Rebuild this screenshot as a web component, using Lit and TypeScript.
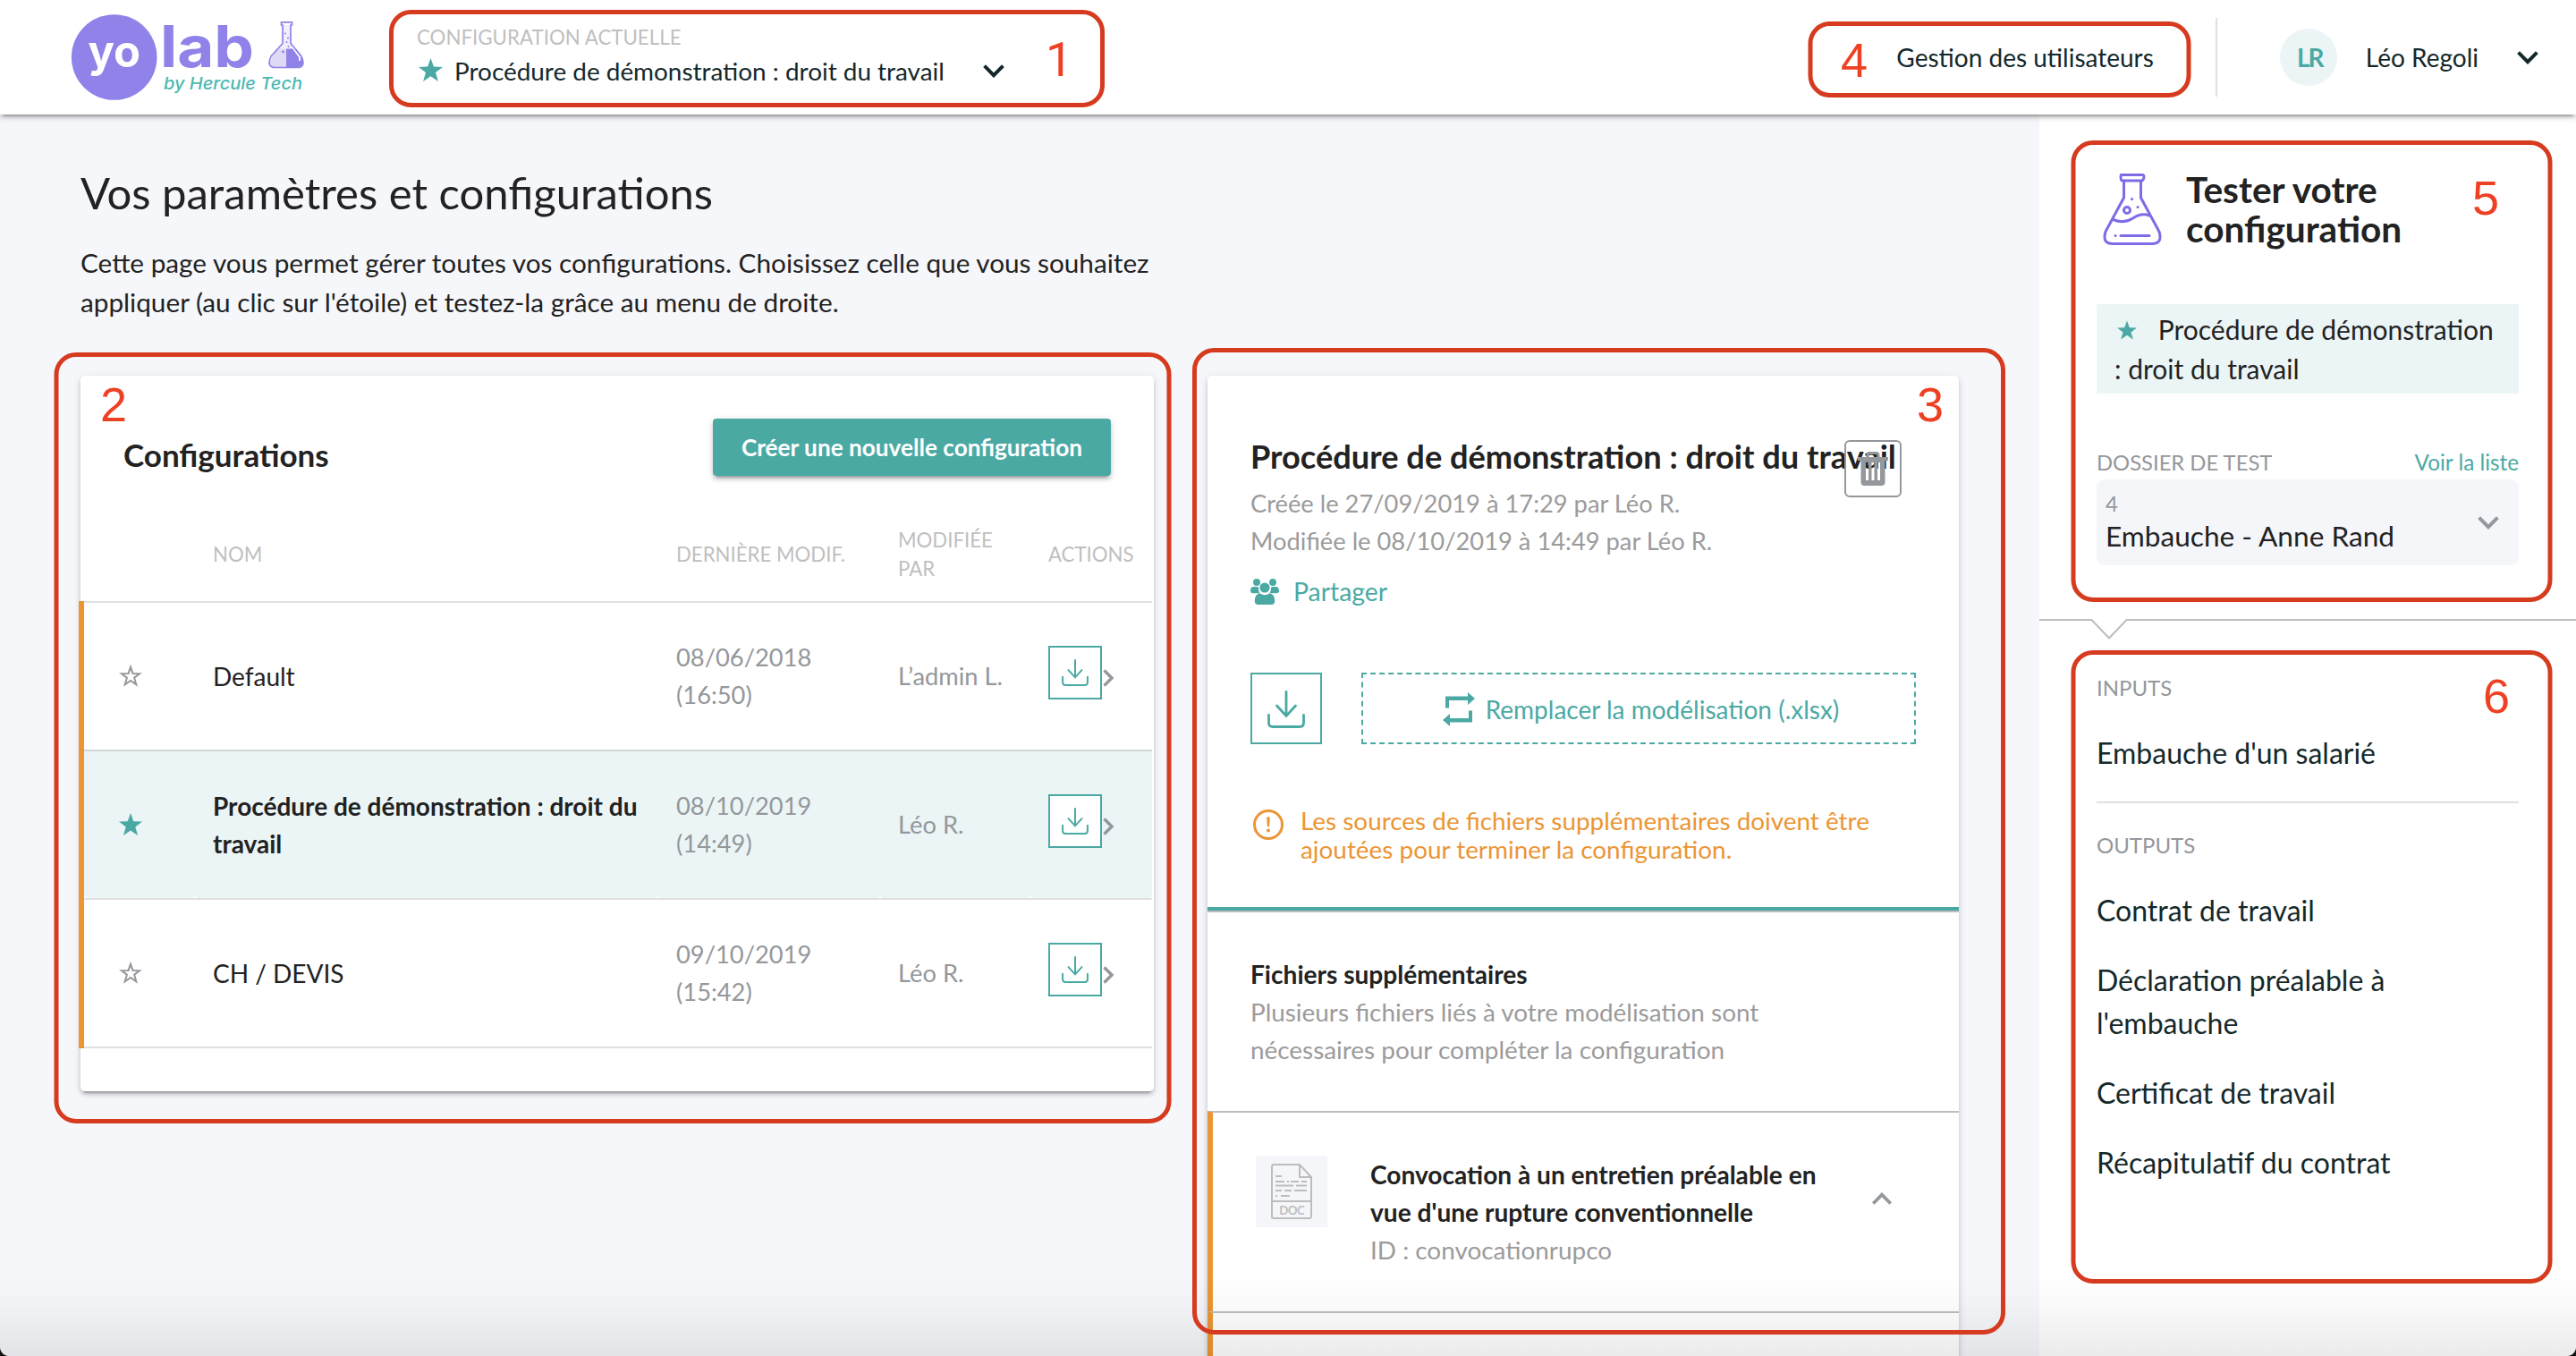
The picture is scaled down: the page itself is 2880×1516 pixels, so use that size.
import { LitElement, css, html, svg } from 'lit';
import { customElement, property } from 'lit/decorators.js';
import { classMap } from 'lit/directives/class-map.js';

interface Configuration {
  name: string;
  date: string;
  time: string;
  author: string;
  active?: boolean;
}

const CONFIGURATIONS: Configuration[] = [
  { name: 'Default', date: '08/06/2018', time: '16:50', author: 'L’admin L.' },
  {
    name: 'Procédure de démonstration : droit du travail',
    date: '08/10/2019',
    time: '14:49',
    author: 'Léo R.',
    active: true,
  },
  { name: 'CH / DEVIS', date: '09/10/2019', time: '15:42', author: 'Léo R.' },
];

const OUTPUTS = [
  'Contrat de travail',
  "Déclaration préalable à l'embauche",
  'Certificat de travail',
  'Récapitulatif du contrat',
];

// frame: x, y, width, height - label: x, baseline
const CALLOUTS = [
  { n: 1, frame: [437.5, 13.5, 795, 104], label: [1169, 85] },
  { n: 2, frame: [63, 396.5, 1244, 857], label: [112, 471] },
  { n: 3, frame: [1335.5, 391.5, 904, 1098], label: [2143, 471] },
  { n: 4, frame: [2024, 26.5, 423, 80], label: [2058, 86] },
  { n: 5, frame: [2318, 159.5, 533, 511], label: [2764, 240] },
  { n: 6, frame: [2318, 729.5, 533, 703], label: [2776, 797] },
];

const star = (filled: boolean) => svg`
  <svg class="star" viewBox="0 0 26 25">
    ${
      filled
        ? svg`<path fill="currentColor" d="M13 0l3.3 9.2 9.7.3-7.7 5.9 2.8 9.6-8.1-5.6L4.9 25l2.8-9.6L0 9.5l9.7-.3z"/>`
        : svg`<path fill="none" stroke="currentColor" stroke-width="2" d="M13 2.8l2.5 7.1 7.6.2-6 4.6 2.2 7.6-6.3-4.4-6.3 4.4 2.2-7.6-6-4.6 7.6-.2z"/>`
    }
  </svg>
`;

const chevron = () => svg`
  <svg class="chevron" viewBox="0 0 24 15">
    <path fill="none" stroke="currentColor" stroke-width="4" d="M1.6 1.6L12 12.2 22.4 1.6"/>
  </svg>
`;

const download = () => svg`
  <svg class="download" viewBox="0 0 42 42">
    <g fill="none" stroke="currentColor" stroke-width="2.8" stroke-linecap="round">
      <path d="M21 1.5V28M10.5 17L21 28.5 31.5 17"/>
      <path d="M1.5 27.5V36q0 4.5 4.5 4.5H36q4.5 0 4.5-4.5V27.5"/>
    </g>
  </svg>
`;

@customElement('yolab-logo')
export class YolabLogo extends LitElement {
  static styles = css`
    :host {
      display: block;
      width: 264px;
      height: 96px;
    }
    svg {
      display: block;
      overflow: visible;
    }
    text {
      font-family: Inter, sans-serif;
      font-weight: 700;
    }
    .yo {
      fill: #fff;
      font-size: 49px;
    }
    .lab {
      fill: #8f82e8;
      font-size: 64px;
    }
    .by {
      fill: #4cb8b1;
      font-size: 19px;
      font-style: italic;
      font-weight: 500;
    }
  `;

  render() {
    return html`
      <svg width="264" height="96" viewBox="0 0 264 96">
        <circle cx="47.7" cy="48" r="47.8" fill="#8f82e8" />
        <text class="yo" x="18.5" y="59">yo</text>
        <text class="lab" x="99" y="59" textLength="105" lengthAdjust="spacingAndGlyphs">lab</text>
        <text class="by" x="103" y="84" textLength="155" lengthAdjust="spacingAndGlyphs">by Hercule Tech</text>
        <path d="M236 12h9v21l9 9H227l9-9z" fill="#f1effc" />
        <path d="M229 38.5h11V59h-12q-9-1-5-8z" fill="#dedaf6" />
        <path d="M240 38.5h11l7 12.5q2 7-5 8h-13z" fill="#8f82e8" />
        <path d="M246.5 36l8.5 12v4" stroke="#fff" stroke-width="1.8" fill="none" />
        <path
          d="M234.5 8.8h12V12H245v20.5L257 47q5.5 12.5-5 12.5h-24q-10.5 0-5-12.5l13-14.5V12h-1.5z"
          fill="none"
          stroke="#8f82e8"
          stroke-width="1.7"
        />
        <g fill="#8f82e8">
          <circle cx="239" cy="21.5" r="1" />
          <circle cx="242" cy="26.5" r="1" />
          <circle cx="240.5" cy="31" r="1" />
          <circle cx="242.5" cy="36" r="1" />
          <circle cx="236.5" cy="42" r="1.4" />
        </g>
      </svg>
    `;
  }
}

@customElement('yolab-header')
export class YolabHeader extends LitElement {
  static styles = css`
    :host {
      position: relative;
      z-index: 1;
      display: flex;
      align-items: center;
      box-sizing: border-box;
      height: 128px;
      padding: 0 42px 0 80px;
      background: #fff;
      color: #14282b;
      font-size: 28px;
      line-height: 40px;
      box-shadow:
        0 4px 4px rgba(0, 0, 0, 0.14),
        0 6px 2px -4px rgba(0, 0, 0, 0.2),
        0 2px 10px rgba(0, 0, 0, 0.12);
    }
    .current {
      flex: 1;
      padding: 0 0 2px 122px;
    }
    .label {
      color: #bfbfbf;
      font-size: 22.3px;
      line-height: 29px;
    }
    .name {
      display: flex;
      align-items: center;
      margin-top: 3px;
      font-size: 27.9px;
    }
    .star {
      width: 27px;
      height: 26px;
      margin: 0 13px 3px 2px;
      color: #4ba9a3;
    }
    .chevron {
      width: 24px;
      height: 15px;
    }
    .name .chevron {
      margin-left: 43px;
    }
    .user {
      display: flex;
      align-items: center;
      height: 88px;
      margin-left: 69px;
      padding-left: 70px;
      border-left: 2px solid #e0e0e0;
    }
    .avatar {
      width: 64px;
      height: 64px;
      margin-right: 32px;
      border-radius: 50%;
      background: #ebf5f6;
      color: #4ba9a3;
      font-weight: 700;
      line-height: 64px;
      text-align: center;
      text-indent: 3px;
      letter-spacing: -2px;
    }
    .user .chevron {
      margin-left: 43px;
    }
  `;

  render() {
    return html`
      <yolab-logo></yolab-logo>
      <div class="current">
        <div class="label">CONFIGURATION ACTUELLE</div>
        <div class="name">
          ${star(true)} Procédure de démonstration : droit du travail ${chevron()}
        </div>
      </div>
      <div class="users">Gestion des utilisateurs</div>
      <div class="user">
        <div class="avatar">LR</div>
        <div>Léo Regoli</div>
        ${chevron()}
      </div>
    `;
  }
}

@customElement('yolab-configurations')
export class YolabConfigurations extends LitElement {
  static styles = css`
    :host {
      display: block;
      height: 800px;
      border-radius: 5px;
      background: #fff;
      box-shadow:
        0 4px 4px rgba(0, 0, 0, 0.14),
        0 6px 2px -4px rgba(0, 0, 0, 0.2),
        0 2px 10px rgba(0, 0, 0, 0.12);
    }
    header {
      display: flex;
      justify-content: space-between;
      align-items: center;
      padding: 48px 48px 0;
    }
    h2 {
      margin: 16px 0 0;
      font-size: 35px;
      line-height: 44px;
    }
    button {
      height: 64px;
      padding: 0 32px;
      border: none;
      border-radius: 4px;
      background: #4ba9a3;
      color: #fff;
      font: 700 26.2px/64px Lato, sans-serif;
      box-shadow:
        0 4px 4px rgba(0, 0, 0, 0.14),
        0 6px 2px -4px rgba(0, 0, 0, 0.2),
        0 2px 10px rgba(0, 0, 0, 0.12);
    }
    .row {
      display: grid;
      grid-template-columns: 6px 124px 518px 248px 168px 136px;
      width: 1200px;
      height: 166px;
      margin-left: -2px;
      color: #94979b;
      font-size: 27.3px;
      line-height: 42px;
    }
    .row:last-child {
      height: 168px;
    }
    .row > div {
      display: flex;
      align-items: center;
      padding: 0 20px;
      border-top: 2px solid #e0e0e0;
    }
    .row > .bar {
      padding: 0;
      border: none;
      background: #eb9534;
    }
    .row > .fav {
      padding: 0 0 1px 39px;
    }
    .row > .actions {
      padding-right: 0;
    }
    .row:last-child > div:not(.bar) {
      border-bottom: 2px solid #e0e0e0;
    }
    .row.active > div:not(.bar) {
      border-top-color: #d0d7d8;
      border-radius: 0 0 4px 4px;
      background: #ebf5f6;
    }
    .row.active > .name {
      font-weight: 700;
    }
    .row.active > .fav {
      color: #4ba9a3;
    }
    .row > .name {
      padding-bottom: 1px;
      color: #222;
      font-size: 28px;
    }
    .row.head {
      height: 107px;
      margin-top: 34px;
      margin-bottom: -1px;
      color: #bfbfbf;
      font-size: 22.2px;
      line-height: 32px;
    }
    .row.head > div {
      padding-bottom: 0;
      border: none;
    }
    .star {
      width: 26px;
      height: 25px;
    }
    .dl {
      box-sizing: border-box;
      width: 60px;
      height: 60px;
      margin-bottom: 8px;
      padding: 13px;
      border: 2px solid #4ba9a3;
      background: #fff;
      color: #4ba9a3;
    }
    .download {
      display: block;
      width: 30px;
      height: 30px;
    }
    .go {
      width: 12px;
      height: 20px;
      margin: 4px 0 0 1px;
    }
  `;

  render() {
    return html`
      <header>
        <h2>Configurations</h2>
        <button>Créer une nouvelle configuration</button>
      </header>
      <div class="row head">
        <div></div>
        <div></div>
        <div>NOM</div>
        <div>DERNIÈRE MODIF.</div>
        <div>MODIFIÉE<br />PAR</div>
        <div class="actions">ACTIONS</div>
      </div>
      ${CONFIGURATIONS.map(
        (c) => html`
          <div class=${classMap({ row: true, active: !!c.active })}>
            <div class="bar"></div>
            <div class="fav">${star(!!c.active)}</div>
            <div class="name">${c.name}</div>
            <div>${c.date}<br />(${c.time})</div>
            <div>${c.author}</div>
            <div class="actions">
              <span class="dl">${download()}</span>
              <svg class="go" viewBox="0 0 12 20">
                <path d="M1.5 1.5L10 10 1.5 18.5" fill="none" stroke="currentColor" stroke-width="3.4" />
              </svg>
            </div>
          </div>
        `,
      )}
    `;
  }
}

@customElement('yolab-detail')
export class YolabDetail extends LitElement {
  static styles = css`
    :host {
      position: relative;
      display: block;
      border-radius: 5px;
      background: #fff;
      color: #9b9b9b;
      font-size: 27.9px;
      line-height: 42px;
      box-shadow:
        0 4px 4px rgba(0, 0, 0, 0.14),
        0 6px 2px -4px rgba(0, 0, 0, 0.2),
        0 2px 10px rgba(0, 0, 0, 0.12);
    }
    h2 {
      margin: 0 0 10px;
      color: #222;
      font-size: 36.2px;
      line-height: 44px;
      white-space: nowrap;
    }
    h3 {
      margin: 0;
      color: #222;
      font-size: 28.1px;
      line-height: 42px;
    }
    .summary {
      padding: 68px 48px 49px;
      border-bottom: 4px solid #4ba9a3;
    }
    .meta {
      font-size: 27.3px;
    }
    .trash {
      position: absolute;
      top: 72px;
      left: 712px;
      box-sizing: border-box;
      width: 64px;
      height: 64px;
      border: 2px solid #94979b;
      border-radius: 6px;
      color: #94979b;
    }
    .trash svg {
      display: block;
      width: 34px;
      height: 38px;
      margin: 11px auto 0;
    }
    .share {
      display: flex;
      align-items: center;
      gap: 16px;
      margin-top: 14px;
      color: #4ba9a3;
      font-size: 28.4px;
    }
    .share svg {
      width: 32px;
      height: 29px;
    }
    .tools {
      display: flex;
      gap: 44px;
      margin-top: 70px;
      color: #4ba9a3;
    }
    .dl {
      box-sizing: border-box;
      width: 80px;
      height: 80px;
      padding: 18px 17px;
      border: 2px solid #4ba9a3;
    }
    .download {
      display: block;
      width: 42px;
      height: 42px;
    }
    .replace {
      flex: 1;
      display: flex;
      justify-content: center;
      align-items: center;
      gap: 12px;
      box-sizing: border-box;
      height: 80px;
      padding: 2px 0 0 5px;
      border: 2px dashed #4ba9a3;
      font-size: 28px;
    }
    .replace svg {
      width: 36px;
      height: 38px;
    }
    .warning {
      display: flex;
      align-items: flex-start;
      gap: 19px;
      margin-top: 69px;
      color: #eb9534;
      line-height: 32px;
    }
    .warning svg {
      flex: none;
      width: 34px;
      height: 34px;
      margin: 4px 0 0 3px;
    }
    .files {
      padding: 48px;
      border-top: 2px solid #bdbdbd;
    }
    .files p {
      max-width: 660px;
      margin: 0;
    }
    .file {
      display: flex;
      align-items: flex-start;
      min-height: 126px;
      padding: 48px;
      border-top: 2px solid #bdbdbd;
      border-left: 6px solid #eb9534;
    }
    .doc {
      display: grid;
      place-items: center;
      width: 80px;
      height: 80px;
      margin-right: 48px;
      background: #f5f6fa;
    }
    .doc svg {
      width: 46px;
      height: 62px;
    }
    .doc text {
      fill: #bdbdbd;
      font-family: 'Open Sans', sans-serif;
      font-size: 14.5px;
      font-weight: 600;
    }
    .about {
      width: 520px;
    }
    .file .chevron {
      width: 24px;
      height: 14px;
      margin: 41px 0 0 40px;
      color: #94979b;
      transform: rotate(180deg);
    }
  `;

  render() {
    return html`
      <section class="summary">
        <h2>Procédure de démonstration : droit du travail</h2>
        <div class="meta">Créée le 27/09/2019 à 17:29 par Léo R.</div>
        <div class="meta">Modifiée le 08/10/2019 à 14:49 par Léo R.</div>
        <div class="share">
          <svg viewBox="0 0 32 29" fill="currentColor">
            <circle cx="7" cy="4" r="4" />
            <circle cx="25" cy="4" r="4" />
            <path d="M3.5 9h4q.8.5 1.500.6-.4 4.200 1.500 6.700H3q-3 0-3-3Q.2 9 3.500 9z" />
            <path d="M28.500 9h-4q-.8.5-1.500.6.4 4.200-1.500 6.700H29q3 0 3-3-.2-4.300-3.500-4.300z" />
            <circle cx="16" cy="10" r="5.6" />
            <path d="M10.500 16.200q5.500 4 11 0 5.700 1.200 5.700 8.800 0 4-4 4H8.800q-4 0-4-4 0-7.600 5.700-8.800z" />
          </svg>
          Partager
        </div>
        <div class="tools">
          <span class="dl">${download()}</span>
          <div class="replace">
            <svg viewBox="0 0 36 38" fill="currentColor">
              <path d="M3 17.5V4.500h25V0l8 7-8 7V9H7v8.500z" />
              <path d="M33 20.500v13H8V38l-8-7 8-7v5h21v-8.500z" />
            </svg>
            Remplacer la modélisation (.xlsx)
          </div>
        </div>
        <div class="warning">
          <svg viewBox="0 0 34 34">
            <circle cx="17" cy="17" r="15.5" fill="none" stroke="currentColor" stroke-width="3" />
            <path d="M15.200 8.500h3.600l-.6 10.500h-2.400z" fill="currentColor" />
            <circle cx="17" cy="23.5" r="2" fill="currentColor" />
          </svg>
          <span>
            Les sources de fichiers supplémentaires doivent être ajoutées pour terminer la configuration.
          </span>
        </div>
      </section>
      <section class="files">
        <h3>Fichiers supplémentaires</h3>
        <p>Plusieurs fichiers liés à votre modélisation sont nécessaires pour compléter la configuration</p>
      </section>
      <section class="file">
        <div class="doc">
          <svg viewBox="0 0 46 62">
            <g fill="none" stroke="#bdbdbd" stroke-width="2">
              <path d="M3 1h29l13 14v44q0 2-2 2H3q-2 0-2-2V3q0-2 2-2zM32 1v14h13M1 42h44" />
              <path d="M5 14h7M5 20h10m3 0h2m2 0h9m3 0h6M5 24.500h20m3 0h12M5 30h7m3 0h8m3 0h14M5 36h2m4 0h10" />
            </g>
            <text x="9" y="56.5" textLength="29">DOC</text>
          </svg>
        </div>
        <div class="about">
          <h3>Convocation à un entretien préalable en vue d'une rupture conventionnelle</h3>
          <div>ID : convocationrupco</div>
        </div>
        ${chevron()}
      </section>
      <section class="file"></section>
      <div class="trash">
        <svg viewBox="0 0 34 38">
          <path d="M11 6V4q0-2.500 2.500-2.500h7Q23 1.500 23 4v2" fill="none" stroke="currentColor" stroke-width="3" />
          <path
            fill="currentColor"
            fill-rule="evenodd"
            d="M0 6h34v4h-3.500v24q0 4-4 4h-19q-4 0-4-4V10H0zM9 12v20h3V12zm6.500 0v20h3V12zm6.500 0v20h3V12z"
          />
        </svg>
      </div>
    `;
  }
}

@customElement('yolab-tester')
export class YolabTester extends LitElement {
  static styles = css`
    :host {
      display: block;
      background: #fff;
      color: #14282b;
    }
    .setup {
      padding: 62px 64px 60px;
      color: #222;
    }
    .title {
      display: flex;
      align-items: flex-start;
      height: 88px;
    }
    .title svg {
      width: 66px;
      height: 80px;
      margin: 4px 27px 0 7px;
    }
    h2 {
      margin: 0;
      font-size: 40.6px;
      line-height: 44px;
    }
    .picked {
      margin-top: 62px;
      padding: 6px 24px 6px 20px;
      background: #ebf5f6;
      font-size: 30px;
      line-height: 44px;
    }
    .star {
      width: 22px;
      height: 22px;
      margin: 0 16px 0 3px;
      color: #4ba9a3;
    }
    .caption {
      display: flex;
      justify-content: space-between;
      margin: 60px 0 2px;
      color: #94979b;
      font-size: 23.8px;
      line-height: 34px;
    }
    .link {
      color: #4ba9a3;
      font-size: 24.3px;
    }
    .select {
      display: flex;
      justify-content: space-between;
      align-items: center;
      box-sizing: border-box;
      height: 96px;
      padding: 0 22px 0 10px;
      border-radius: 9px;
      background: #f5f6fa;
      font-size: 31.6px;
      line-height: 43px;
    }
    .num {
      color: #94979b;
      font-size: 24px;
      line-height: 31px;
    }
    .chevron {
      width: 24px;
      height: 15px;
      color: #94979b;
    }
    .split {
      display: block;
      width: 600px;
      height: 24px;
    }
    .docs {
      padding: 35px 64px 0;
      font-size: 32px;
      line-height: 48px;
    }
    .label {
      color: #94979b;
      font-size: 24px;
      line-height: 36px;
    }
    ul {
      display: flex;
      flex-direction: column;
      gap: 30px;
      margin: 31px 0 30px;
      padding: 0;
      list-style: none;
    }
    li {
      max-width: 400px;
    }
    .outputs {
      padding-top: 29px;
      border-top: 2px solid #e0e0e0;
    }
  `;

  @property({ type: Array }) outputs: string[] = [];

  render() {
    return html`
      <section class="setup">
        <div class="title">
          <svg viewBox="0 0 66 80" fill="none" stroke="#7c6de6" stroke-width="3" stroke-linecap="round">
            <path d="M22 1.500h22q2 0 2 2.500t-2 4H22q-2 0-2-4t2-2.500z" />
            <path d="M23.500 8v19L3 65q-4 13.500 8 13.500h44Q67 78.500 63 65L42.500 27V8" />
            <path d="M11.500 51.500q12 5 22-1.500t18.500-3" />
            <circle cx="27" cy="41" r="3.5" />
            <path d="M20 69.500h32M14 69.500h.1M32.500 28.500h.1M39 37.500h.1" />
          </svg>
          <h2>Tester votre<br />configuration</h2>
        </div>
        <div class="picked">${star(true)} Procédure de démonstration : droit du travail</div>
        <div class="caption">
          <span>DOSSIER DE TEST</span>
          <span class="link">Voir la liste</span>
        </div>
        <div class="select">
          <div>
            <div class="num">4</div>
            <div>Embauche - Anne Rand</div>
          </div>
          ${chevron()}
        </div>
      </section>
      <svg class="split" viewBox="0 0 600 24" fill="none" stroke="#bdbdbd" stroke-width="2">
        <path d="M0 1h58.500l19.500 20.500L97.500 1H600" />
      </svg>
      <section class="docs">
        <div class="label">INPUTS</div>
        <ul>
          <li>Embauche d'un salarié</li>
        </ul>
        <div class="outputs">
          <div class="label">OUTPUTS</div>
          <ul>
            ${this.outputs.map((name) => html`<li>${name}</li>`)}
          </ul>
        </div>
      </section>
    `;
  }
}

@customElement('app-root')
export class AppRoot extends LitElement {
  static styles = css`
    :host {
      position: relative;
      display: flex;
      flex-direction: column;
      width: 2880px;
      height: 1516px;
      overflow: hidden;
      background: #f6f7fb;
      color: #222;
      font-family: Lato, sans-serif;
    }
    .body {
      flex: 1;
      display: grid;
      grid-template-columns: 2280px 600px;
      min-height: 0;
    }
    main {
      padding: 58px 90px 0;
    }
    h1 {
      margin: 0 0 28px;
      font-size: 49px;
      font-weight: 400;
      line-height: 58px;
    }
    .intro {
      width: 1210px;
      margin: 0 0 60px;
      font-size: 29.73px;
      line-height: 44px;
    }
    .cards {
      display: grid;
      grid-template-columns: 1200px 840px;
      align-items: start;
      gap: 60px;
    }
    .shade {
      position: absolute;
      inset: auto 0 0;
      z-index: 2;
      height: 90px;
      background: linear-gradient(rgba(0, 0, 0, 0), rgba(0, 0, 0, 0.02) 35%, rgba(0, 0, 0, 0.08));
    }
    .corner {
      position: absolute;
      bottom: 0;
      z-index: 4;
      width: 10px;
      height: 10px;
    }
    .corner.left {
      left: 0;
      background: radial-gradient(circle at 100% 0, transparent 9.5px, #111 10.5px);
    }
    .corner.right {
      right: 0;
      background: radial-gradient(circle at 0 0, transparent 9.5px, #111 10.5px);
    }
    .callouts {
      position: absolute;
      inset: 0;
      z-index: 3;
    }
    .callouts rect {
      fill: none;
      stroke: #d63a1f;
      stroke-width: 5;
    }
    .callouts text {
      fill: #ee4023;
      font-family: 'Liberation Sans', sans-serif;
      font-size: 54px;
    }
    /* plain stem for the "1", without the foot */
    .callouts text.one {
      font-family: Roboto, sans-serif;
    }
  `;

  render() {
    return html`
      <yolab-header></yolab-header>
      <div class="body">
        <main>
          <h1>Vos paramètres et configurations</h1>
          <p class="intro">
            Cette page vous permet gérer toutes vos configurations. Choisissez celle que vous souhaitez appliquer
            (au clic sur l'étoile) et testez-la grâce au menu de droite.
          </p>
          <div class="cards">
            <yolab-configurations></yolab-configurations>
            <yolab-detail></yolab-detail>
          </div>
        </main>
        <yolab-tester .outputs=${OUTPUTS}></yolab-tester>
      </div>
      <div class="shade"></div>
      <svg class="callouts" width="2880" height="1516">
        ${CALLOUTS.map(
          ({ n, frame: [x, y, w, h], label }) => svg`
            <rect x=${x} y=${y} width=${w} height=${h} rx="22"></rect>
            <text class=${n === 1 ? 'one' : ''} x=${label[0]} y=${label[1]}>${n}</text>
          `,
        )}
      </svg>
      <div class="corner left"></div>
      <div class="corner right"></div>
    `;
  }
}
